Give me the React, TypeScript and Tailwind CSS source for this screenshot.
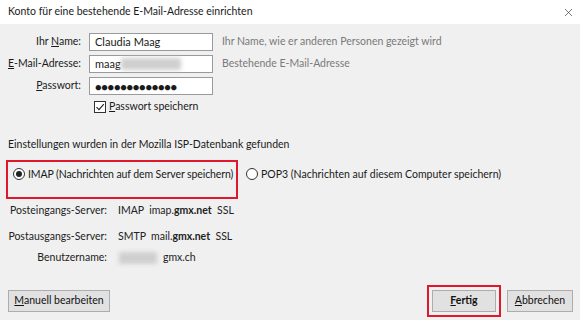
import { X } from 'lucide-react'

const Blur = ({ w }: { w: number }) => (
  <span className="inline-block h-[12px] bg-[#cfcfcf] blur-[2px] align-middle" style={{ width: w }} />
)

const Btn = ({ children, className = '' }: { children: React.ReactNode; className?: string }) => (
  <button className={`h-[22px] border border-[#adadad] bg-[#e1e1e1] text-[#111] whitespace-nowrap ${className}`}>{children}</button>
)

const FormRow = ({ label, children, hint }: { label: React.ReactNode; children: React.ReactNode; hint?: string }) => (
  <div className="flex items-center h-[18px]">
    <span className="w-[82px] text-right pr-[1px] whitespace-nowrap">{label}</span>
    <div className="ml-[7px] w-[124px] h-[18px] border border-[#9a9a9a] bg-white flex items-center px-[5px] text-[11px]">{children}</div>
    {hint && <span className="ml-[9px] text-[#7a7a7a] whitespace-nowrap">{hint}</span>}
  </div>
)

export default function App() {
  return (
    <div className="w-[580px] h-[320px] bg-[#f0f0f0] text-[10.5px] text-[#1a1a1a] flex flex-col overflow-hidden whitespace-nowrap"
      style={{ fontFamily: '"Lato", "Noto Sans", sans-serif' }}>
      <div className="h-[24px] bg-white flex items-center justify-between pl-[8px] pr-[5px] shrink-0">
        <span>Konto für eine bestehende E-Mail-Adresse einrichten</span>
        <X size={13} strokeWidth={1.2} className="text-[#333]" />
      </div>

      <div className="flex flex-col gap-[4px] pt-[9px]">
        <FormRow label={<>Ihr <u>N</u>ame:</>} hint="Ihr Name, wie er anderen Personen gezeigt wird">Claudia Maag</FormRow>
        <FormRow label={<><u>E</u>-Mail-Adresse:</>} hint="Bestehende E-Mail-Adresse">
          <span>maag</span><Blur w={60} />
        </FormRow>
        <FormRow label={<><u>P</u>asswort:</>}>
          <span className="text-[11px] leading-none tracking-[-0.3px]">●●●●●●●●●●●●●</span>
        </FormRow>
      </div>

      <label className="flex items-center ml-[94px] mt-[6px] h-[12px]">
        <span className="w-[12px] h-[12px] border border-[#333] bg-white flex items-center justify-center">
          <svg width="10" height="10" viewBox="0 0 10 10"><path d="M1.5 5.2 L4 7.6 L8.8 2.2" fill="none" stroke="#222" strokeWidth="1.1" /></svg>
        </span>
        <span className="ml-[3px]"><u>P</u>asswort speichern</span>
      </label>

      <div className="ml-[8px] mt-[24px]">Einstellungen wurden in der Mozilla ISP-Datenbank gefunden</div>

      <div className="flex items-start mt-[7px]">
        <div className="ml-[6px] w-[232px] h-[39px] border-2 border-[#e0182d] flex items-start pt-[6px] pl-[5px]">
          <span className="w-[12px] h-[12px] rounded-full border border-[#333] bg-white flex items-center justify-center shrink-0">
            <span className="w-[6px] h-[6px] rounded-full bg-[#222]" />
          </span>
          <span className="ml-[3px] leading-[13px] tracking-[-0.1px]">IMAP (Nachrichten auf dem Server speichern)</span>
        </div>
        <div className="flex items-start ml-[8px] pt-[8px]">
          <span className="w-[12px] h-[12px] rounded-full border border-[#333] bg-white shrink-0" />
          <span className="ml-[3px] leading-[13px]">POP3 (Nachrichten auf diesem Computer speichern)</span>
        </div>
      </div>

      <div className="flex flex-col mt-[4px] text-[#222]">
        <div className="flex items-center h-[16px]">
          <span className="w-[107px] text-right">Posteingangs-Server:</span>
          <span className="ml-[11px]">IMAP&nbsp; imap.<b>gmx.net</b>&nbsp; SSL</span>
        </div>
        <div className="flex items-center h-[16px] mt-[10px]">
          <span className="w-[107px] text-right">Postausgangs-Server:</span>
          <span className="ml-[11px]">SMTP&nbsp; mail.<b>gmx.net</b>&nbsp; SSL</span>
        </div>
        <div className="flex items-center h-[16px] mt-[5px]">
          <span className="w-[107px] text-right">Benutzername:</span>
          <span className="ml-[12px] flex items-center"><Blur w={38} /><span className="ml-[6px]">gmx.ch</span></span>
        </div>
      </div>

      <div className="flex items-center mt-[19px] px-[8px] pr-[7px]">
        <Btn className="w-[102px]"><u>M</u>anuell bearbeiten</Btn>
        <div className="ml-auto border-2 border-[#e0182d] p-[3px]">
          <Btn className="w-[64px] font-bold block"><u>F</u>ertig</Btn>
        </div>
        <Btn className="w-[66px] ml-[6px]"><u>A</u>bbrechen</Btn>
      </div>
    </div>
  )
}
